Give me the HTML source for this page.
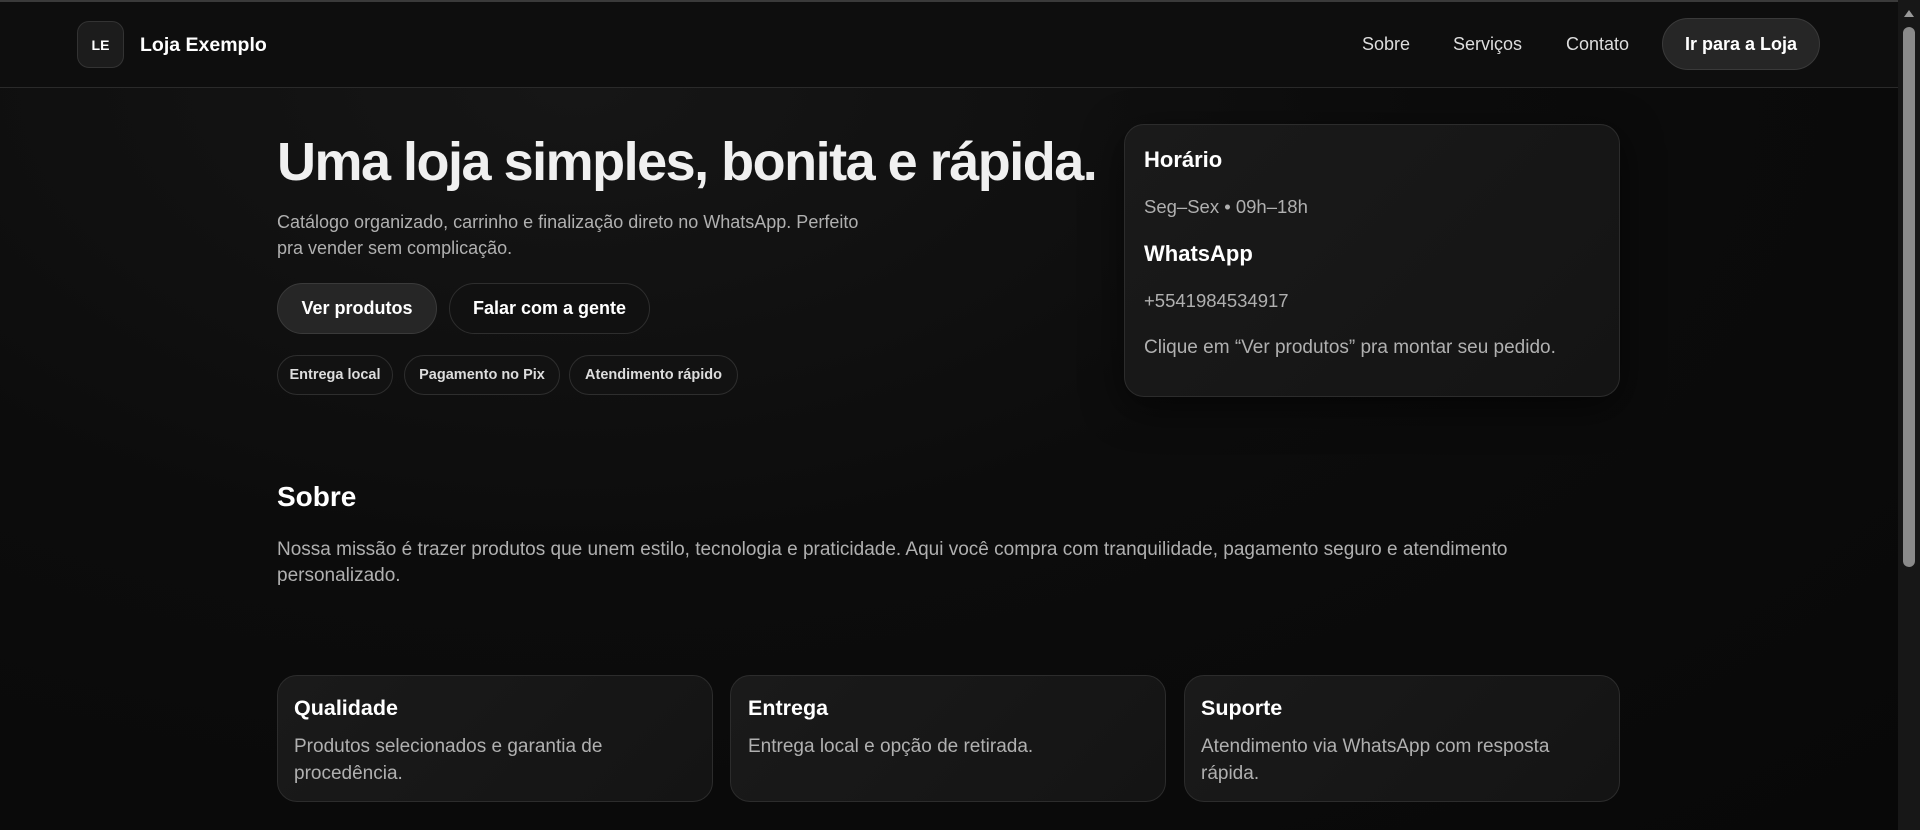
<!DOCTYPE html>
<html><head><meta charset="utf-8"><style>
*{margin:0;padding:0;box-sizing:border-box}
html,body{width:1920px;height:830px;overflow:hidden}
body{background:radial-gradient(ellipse at 30% 10%,#161616 0%,#0c0c0c 45%,#080808 100%);font-family:"Liberation Sans",sans-serif;color:#eee;position:relative}
.a{position:absolute;white-space:nowrap}
.hdr{position:absolute;left:0;top:0;width:1898px;height:88px;background:#0e0e0e;border-top:2px solid #3a3a3a;border-bottom:1px solid #2a2a2a}
.logo{left:77px;top:21px;width:47px;height:47px;border:1px solid #333;border-radius:12px;background:#1c1c1c;font-weight:bold;font-size:14px;display:flex;align-items:center;justify-content:center;color:#fff}
.nav{font-size:18px;color:#ddd;top:34px}
.btn{border:1px solid #3a3a3a;border-radius:28px;display:flex;align-items:center;justify-content:center;font-weight:bold;color:#fff}
.chip{border:1px solid #2e2e2e;border-radius:20px;background:#121212;display:flex;align-items:center;justify-content:center;font-weight:bold;font-size:14.5px;color:#ddd;top:355px;height:40px}
.card{border:1px solid #2c2c2c;border-radius:20px;background:linear-gradient(135deg,#1a1a1a,#141414)}
.gray{color:#b0b0b0}
.sb{position:absolute;right:0;top:0;width:22px;height:830px;background:#171717}
.thumb{position:absolute;right:5px;top:27px;width:12px;height:540px;background:#8a8a8a;border-radius:6px}
</style></head><body>
<div class="hdr"></div>
<div class="a logo">LE</div>
<div class="a" style="left:140px;top:34px;font-size:19.5px;font-weight:bold;color:#fff">Loja Exemplo</div>
<div class="a nav" style="left:1362px">Sobre</div>
<div class="a nav" style="left:1453px">Serviços</div>
<div class="a nav" style="left:1566px">Contato</div>
<div class="a btn" style="left:1662px;top:18px;width:158px;height:52px;background:#262626;font-size:18px">Ir para a Loja</div>

<div class="a" style="left:277px;top:131px;font-size:54px;font-weight:bold;color:#f0f0f0;letter-spacing:-1.5px">Uma loja simples, bonita e rápida.</div>
<div class="a gray" style="left:277px;top:209px;font-size:18px;line-height:26px">Catálogo organizado, carrinho e finalização direto no WhatsApp. Perfeito<br>pra vender sem complicação.</div>
<div class="a btn" style="left:277px;top:283px;width:160px;height:51px;background:#262626;font-size:18px">Ver produtos</div>
<div class="a btn" style="left:449px;top:283px;width:201px;height:51px;background:#111;border-color:#2e2e2e;font-size:18px">Falar com a gente</div>
<div class="a chip" style="left:277px;width:116px">Entrega local</div>
<div class="a chip" style="left:404px;width:156px">Pagamento no Pix</div>
<div class="a chip" style="left:569px;width:169px">Atendimento rápido</div>

<div class="a card" style="left:1124px;top:124px;width:496px;height:273px;box-shadow:0 10px 40px rgba(0,0,0,.6)"></div>
<div class="a" style="left:1144px;top:147px;font-size:22px;font-weight:bold;color:#fff">Horário</div>
<div class="a gray" style="left:1144px;top:196px;font-size:18.5px">Seg–Sex • 09h–18h</div>
<div class="a" style="left:1144px;top:241px;font-size:22px;font-weight:bold;color:#fff">WhatsApp</div>
<div class="a gray" style="left:1144px;top:290px;font-size:18.5px">+5541984534917</div>
<div class="a gray" style="left:1144px;top:337px;font-size:19px">Clique em “Ver produtos” pra montar seu pedido.</div>

<div class="a" style="left:277px;top:481px;font-size:28px;font-weight:bold;color:#fff">Sobre</div>
<div class="a gray" style="left:277px;top:537px;font-size:19px;line-height:26px">Nossa missão é trazer produtos que unem estilo, tecnologia e praticidade. Aqui você compra com tranquilidade, pagamento seguro e atendimento<br>personalizado.</div>

<div class="a card" style="left:277px;top:675px;width:436px;height:127px"></div>
<div class="a card" style="left:730px;top:675px;width:436px;height:127px"></div>
<div class="a card" style="left:1184px;top:675px;width:436px;height:127px"></div>
<div class="a" style="left:294px;top:696px;font-size:21.5px;font-weight:bold;color:#fff">Qualidade</div>
<div class="a gray" style="left:294px;top:733px;font-size:19px;line-height:27px">Produtos selecionados e garantia de<br>procedência.</div>
<div class="a" style="left:748px;top:696px;font-size:21.5px;font-weight:bold;color:#fff">Entrega</div>
<div class="a gray" style="left:748px;top:733px;font-size:19px;line-height:27px">Entrega local e opção de retirada.</div>
<div class="a" style="left:1201px;top:696px;font-size:21.5px;font-weight:bold;color:#fff">Suporte</div>
<div class="a gray" style="left:1201px;top:733px;font-size:19px;line-height:27px">Atendimento via WhatsApp com resposta<br>rápida.</div>

<div class="sb"><div class="thumb"></div></div>
<div class="a" style="right:6px;top:10px;width:0;height:0;border-left:5px solid transparent;border-right:5px solid transparent;border-bottom:7px solid #999"></div>
</body></html>
